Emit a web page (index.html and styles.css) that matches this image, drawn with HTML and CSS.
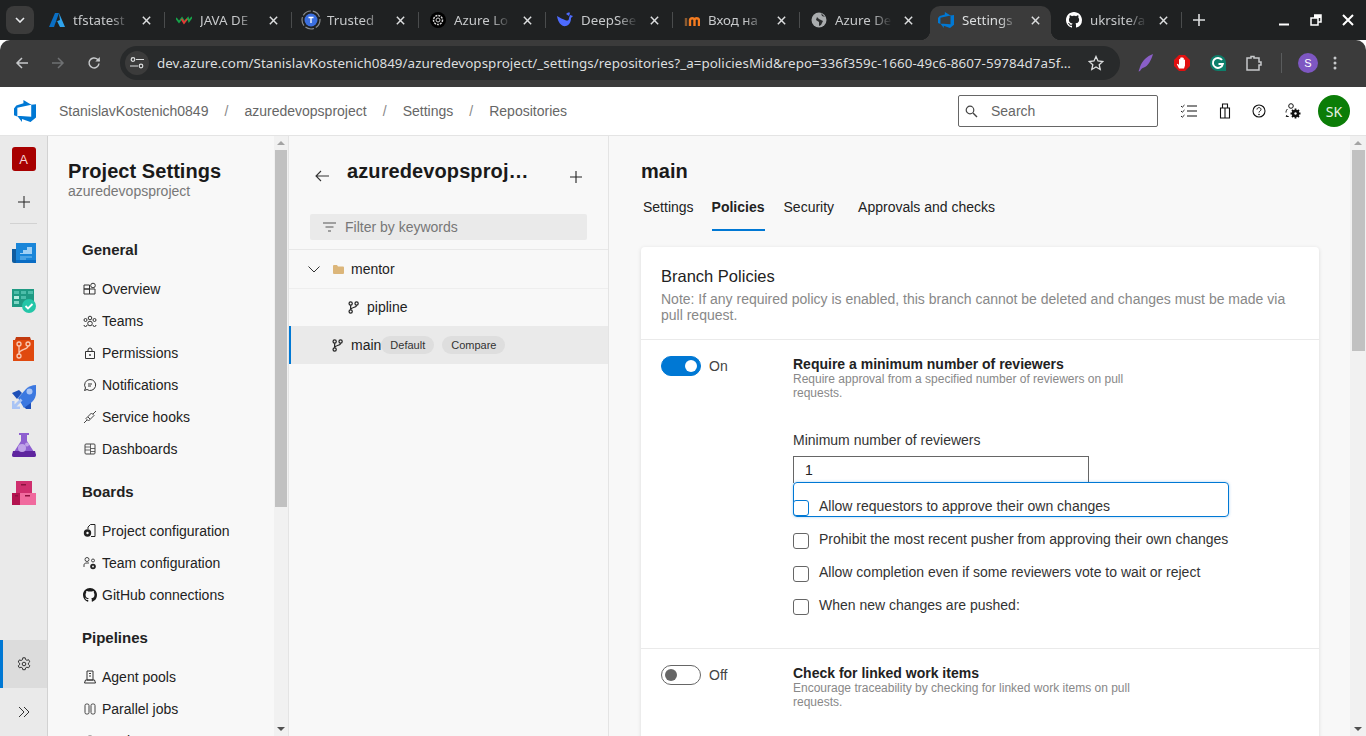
FILE: index.html
```html
<!DOCTYPE html>
<html lang="en">
<head>
<meta charset="UTF-8">
<meta name="viewport" content="width=device-width, initial-scale=1.0">
<title>Settings</title>
<link rel="stylesheet" href="styles.css">
</head>
<body>

<svg class="defs" width="0" height="0">
    <symbol id="x" viewBox="0 0 12 12"><path d="M2 2l8 8M10 2l-8 8" stroke="#dcdedf" stroke-width="1.6" fill="none"/></symbol>
    <symbol id="devops" viewBox="1 1 16 16"><path d="M17 4v9.740l-4 3.280-6.200-2.260V17l-3.510-4.590 10.230.8V4.440zM13.590 4.490L7.850 1v2.430L2.690 4.940 1 7.110v4.930l2.420 1V6.720z" fill="#0078d4"/></symbol>
    <symbol id="branch" viewBox="0 0 16 16"><g fill="none" stroke="#222" stroke-width="1.500"><circle cx="4.500" cy="3.200" r="2"/><circle cx="4.500" cy="12.800" r="2"/><circle cx="11.800" cy="3.200" r="2"/><path d="M4.500 5.200v5.600M11.800 5.200c0 3.300-7.300 2.300-7.300 5.300"/></g></symbol>
</svg>

<!-- tab strip -->
<div class="tabstrip">
    <div class="tab-menu"><svg width="10" height="6" viewBox="0 0 10 6"><path d="M1 1l4 4 4-4" stroke="#e8eaed" stroke-width="1.600" fill="none"/></svg></div>
    <div class="tab">
        <svg class="favicon" viewBox="0 0 16 16"><path d="M6 1h4L5 15H0z" fill="#0a6fc4"/><path d="M10 1l6 14h-5L8 9l-2 1 5-2z" fill="#2fa3ec"/></svg>
        <span class="tab-title">tfstatest</span><svg class="tab-x"><use href="#x"/></svg>
    </div>
    <div class="tab">
        <svg class="favicon" viewBox="0 0 16 16"><path d="M0 6l3 4 3-4 2.500 4L12 6l1 3 3-4" fill="none" stroke="#17a34a" stroke-width="1.800"/><path d="M5.500 7l2.500 4 3-4" fill="none" stroke="#e53935" stroke-width="1.800"/></svg>
        <span class="tab-title">JAVA DE</span><svg class="tab-x"><use href="#x"/></svg>
    </div>
    <div class="tab tab-wide-icon">
        <svg class="favicon" viewBox="0 0 20 20"><circle cx="10" cy="10" r="9" fill="none" stroke="#8a8c8e" stroke-width="1.200" stroke-dasharray="9 2"/><circle cx="10" cy="10" r="6.500" fill="#3b6fe0"/><path d="M7.500 7.500h5M10 7.500v5.500" stroke="#fff" stroke-width="1.300"/></svg>
        <span class="tab-title">Trusted</span><svg class="tab-x"><use href="#x"/></svg>
    </div>
    <div class="tab">
        <svg class="favicon" viewBox="0 0 16 16"><circle cx="8" cy="8" r="8" fill="#000"/><circle cx="8" cy="8" r="4.500" fill="none" stroke="#d5d5d5" stroke-width="1.500" stroke-dasharray="2 1"/><circle cx="8" cy="8" r="2" fill="none" stroke="#d5d5d5"/></svg>
        <span class="tab-title">Azure Lo</span><svg class="tab-x"><use href="#x"/></svg>
    </div>
    <div class="tab">
        <svg class="favicon" viewBox="0 0 16 16"><path d="M0 4c1 7 5 11 9 10 4-1 5-5 5-8l2-2-3-1-1 3c0 3-2 3-4 2C6 7 3 6 0 4z" fill="#4d6bfe"/><path d="M9 2c1-1 3-2 4-1l-1 3z" fill="#4d6bfe"/></svg>
        <span class="tab-title">DeepSee</span><svg class="tab-x"><use href="#x"/></svg>
    </div>
    <div class="tab">
        <svg class="favicon" viewBox="0 0 16 16"><path d="M6 14V8a2.300 2.300 0 0 1 4.500 0v6M10.500 8a2.300 2.300 0 0 1 4.500 0v6" fill="none" stroke="#f47b20" stroke-width="2.400"/><path d="M2 14V6" stroke="#8a5a30" stroke-width="2.400"/></svg>
        <span class="tab-title">Вход на</span><svg class="tab-x"><use href="#x"/></svg>
    </div>
    <div class="tab">
        <svg class="favicon" viewBox="0 0 16 16"><circle cx="8" cy="8" r="7.500" fill="#a9acae"/><path d="M3 2l3 3-1 3 3 2v4l2-1 2-4-4-2zM10 1l1 3 3 1z" fill="#2b2d2e"/></svg>
        <span class="tab-title">Azure De</span><svg class="tab-x"><use href="#x"/></svg>
    </div>
    <div class="tab tab-active">
        <svg class="favicon"><use href="#devops"/></svg>
        <span class="tab-title">Settings</span><svg class="tab-x"><use href="#x"/></svg>
    </div>
    <div class="tab">
        <svg class="favicon" viewBox="0 0 16 16"><path fill="#fff" d="M8 0C3.580 0 0 3.580 0 8c0 3.540 2.290 6.530 5.470 7.590.4.070.55-.170.55-.380 0-.190-.010-.820-.010-1.490-2.010.370-2.530-.490-2.690-.940-.090-.230-.480-.940-.820-1.130-.280-.150-.680-.520-.010-.530.630-.010 1.080.580 1.230.820.720 1.210 1.870.870 2.330.660.070-.520.280-.870.510-1.070-1.780-.200-3.640-.890-3.640-3.950 0-.870.310-1.590.820-2.150-.080-.200-.360-1.020.080-2.120 0 0 .670-.210 2.200.820.640-.180 1.320-.270 2-.270s1.360.090 2 .270c1.530-1.040 2.200-.820 2.200-.820.440 1.100.160 1.920.080 2.120.510.560.820 1.270.820 2.150 0 3.070-1.870 3.750-3.650 3.950.290.250.540.730.540 1.480 0 1.070-.010 1.930-.010 2.200 0 .210.150.460.550.380A8.010 8.010 0 0 0 16 8c0-4.420-3.580-8-8-8z"/></svg>
        <span class="tab-title">ukrsite/a</span><svg class="tab-x"><use href="#x"/></svg>
    </div>
    <svg class="new-tab" width="12" height="12" viewBox="0 0 12 12"><path d="M6 0v12M0 6h12" stroke="#dcdedf" stroke-width="1.600"/></svg>
    <div class="window-btns">
        <svg width="12" height="12" viewBox="0 0 12 12"><path d="M1 10.500h10" stroke="#fff" stroke-width="2"/></svg>
        <svg width="12" height="12" viewBox="0 0 12 12"><path d="M4 1h7v7H8.500M1 4h7v7H1z" fill="none" stroke="#fff" stroke-width="1.500"/><path d="M4 1h7v3H4z" fill="#fff"/></svg>
        <svg width="12" height="12" viewBox="0 0 12 12"><path d="M1 1l10 10M11 1L1 11" stroke="#fff" stroke-width="2"/></svg>
    </div>
</div>

<!-- browser toolbar -->
<div class="toolbar">
    <div class="nav-btn"><svg width="14" height="14" viewBox="0 0 14 14"><path d="M13 7H2M7 2L2 7l5 5" fill="none" stroke="#c7c9cb" stroke-width="1.500"/></svg></div>
    <div class="nav-btn"><svg width="14" height="14" viewBox="0 0 14 14"><path d="M1 7h11M7 2l5 5-5 5" fill="none" stroke="#6f7173" stroke-width="1.500"/></svg></div>
    <div class="nav-btn"><svg width="14" height="14" viewBox="0 0 14 14"><path d="M12 7.500A5 5 0 1 1 10.500 3.300L12.500 5" fill="none" stroke="#c7c9cb" stroke-width="1.500"/><path d="M12.800 1v4.500H8.300z" fill="#c7c9cb"/></svg></div>
    <div class="omnibox">
        <div class="site-btn"><svg width="14" height="12" viewBox="0 0 14 12"><g fill="none" stroke="#dcdedf" stroke-width="1.200"><circle cx="3" cy="2.500" r="1.800"/><path d="M6 2.500h8M0 9h8"/><circle cx="11" cy="9" r="1.800"/></g></svg></div>
        <span class="url">dev.azure.com/StanislavKostenich0849/azuredevopsproject/_settings/repositories?_a=policiesMid&amp;repo=336f359c-1660-49c6-8607-59784d7a5f…</span>
        <svg class="star" width="16" height="16" viewBox="0 0 16 16"><path d="M8 1.500l2 4.500 4.800.5-3.600 3.200 1 4.800L8 12l-4.200 2.500 1-4.800L1.200 6.500 6 6z" fill="none" stroke="#dcdedf" stroke-width="1.300"/></svg>
    </div>
    <div class="ext-btns">
        <svg width="16" height="18" viewBox="0 0 16 18"><path d="M15 0C9 2 4 7 2 13c-.5 1.500-1 3-1.500 4.500L2 17c1-2 2-3 4-3.500 4-1.500 7-7 9-13.500z" fill="#8a5fc7"/></svg>
        <svg width="16" height="16" viewBox="0 0 16 16"><path d="M5 0h6l5 5v6l-5 5H5l-5-5V5z" fill="#e01010"/><path d="M5 13.500L2.800 9.300l1-.6L5 10V4.500a.6.600 0 0 1 1.200 0V3a.6.600 0 0 1 1.200 0v-.3a.6.600 0 0 1 1.200 0V3.300a.6.600 0 0 1 1.200 0V5a.6.600 0 0 1 1.200 0v5.500l-1 3z" fill="#fff"/></svg>
        <svg width="16" height="16" viewBox="0 0 16 16"><path d="M8 0a8 8 0 0 1 8 8v8H8A8 8 0 0 1 8 0z" fill="#0d7f6b"/><path d="M12 5a5 5 0 1 0 .8 4H8.500" fill="none" stroke="#fff" stroke-width="2"/></svg>
        <svg width="16" height="16" viewBox="0 0 16 16"><path d="M1 3h4V1.500h3V3h5v4h2v3h-2v5H1z" fill="none" stroke="#c7c9cb" stroke-width="1.500"/></svg>
        <span class="ext-sep"></span>
        <span class="profile">S</span>
        <svg class="ext-dots" width="4" height="14" viewBox="0 0 4 14"><g fill="#c7c9cb"><circle cx="2" cy="2" r="1.500"/><circle cx="2" cy="7" r="1.500"/><circle cx="2" cy="12" r="1.500"/></g></svg>
    </div>
</div>

<!-- azure devops header -->
<div class="header">
    <svg class="logo"><use href="#devops"/></svg>
    <div class="crumbs">
        <span>StanislavKostenich0849</span><i>/</i>
        <span>azuredevopsproject</span><i>/</i>
        <span>Settings</span><i>/</i>
        <span>Repositories</span>
    </div>
    <div class="search">
        <svg width="13" height="13" viewBox="0 0 13 13"><circle cx="5" cy="5" r="3.800" fill="none" stroke="#444" stroke-width="1.200"/><path d="M8 8l4 4" stroke="#444" stroke-width="1.400"/></svg>
        <span>Search</span>
    </div>
    <div class="head-icons">
        <svg height="14" viewBox="0 0 16 14"><path d="M6 2h10M6 7h10M6 12h10" stroke="#111" stroke-width="1.200"/><path d="M0 2l1.300 1.200L3.500 1M0 7l1.300 1.200L3.500 6M0 12l1.300 1.200L3.500 11" fill="none" stroke="#222" stroke-width="1"/></svg>
        <svg height="16" viewBox="0 0 12 16"><path d="M3.500 5V1h5v4M1.500 5h9v10h-9zM6 5v10" fill="none" stroke="#111" stroke-width="1.100"/></svg>
        <svg height="14" viewBox="0 0 14 14"><circle cx="7" cy="7" r="6" fill="none" stroke="#111" stroke-width="1.100"/><path d="M5 5.500C5 3 9 3 9 5.500 9 7 7 7 7 8.500" fill="none" stroke="#111"/><circle cx="7" cy="10.500" r=".8" fill="#111"/></svg>
        <svg height="16" viewBox="0 0 16 16"><circle cx="6" cy="3" r="2.300" fill="none" stroke="#111"/><path d="M2.500 6C1.500 7 1 8 1 9.500M2 12l-.8 1.500h2.500" fill="none" stroke="#111"/><path d="M10.500 5.500v10M5.500 10.500h10M7 7l7 7M14 7l-7 7" stroke="#111" stroke-width="1.800"/><circle cx="10.500" cy="10.500" r="3.700" fill="#111"/><circle cx="10.500" cy="10.500" r="1.200" fill="#fff"/></svg>
    </div>
    <div class="user">SK</div>
</div>

<div class="app">
    <!-- left rail -->
    <div class="rail">
        <div class="org">A</div>
        <svg class="rail-plus" width="12" height="12" viewBox="0 0 12 12"><path d="M6 0v12M0 6h12" stroke="#222" stroke-width="1"/></svg>
        <div class="rail-divider"></div>
        <svg class="rail-icon" viewBox="0 0 24 24"><path d="M0 8h5v14H2a2 2 0 0 1-2-2z" fill="#0f5c9f"/><path d="M4 2h20v20H4z" fill="#1a86d9"/><path d="M8 12h3V9h4V6h5v7H8z" fill="#9fd0f5"/><path d="M8 15h12v2H14v2H8z" fill="#4aa3e4"/><path d="M4 19h20v3H4z" fill="#0a6cc4"/></svg>
        <svg class="rail-icon" viewBox="0 0 24 24"><path d="M0 0h22v18H0z" fill="#1f9a83"/><path d="M2 2h5v3H2zM9 2h5v3H9zM16 2h5v3h-5zM9 7h5v3H9z" fill="#4cbda9"/><path d="M2 7h5v3H2z" fill="#b9ece1"/><path d="M2 12h5v3H2z" fill="#7ed5c4"/><circle cx="17" cy="17" r="7" fill="#24c6a8"/><path d="M13.500 17l2.500 2.500 4.500-4.500" fill="none" stroke="#fff" stroke-width="1.800"/></svg>
        <svg class="rail-icon" viewBox="0 0 24 24"><path d="M4 0h14l1 3H3z" fill="#c23a0f"/><path d="M1 3h21v21H1z" fill="#e0490f"/><g fill="none" stroke="#f9c9b3" stroke-width="1.300"><circle cx="7" cy="7" r="2"/><circle cx="16" cy="7" r="2"/><circle cx="7" cy="19" r="2"/><path d="M7 9v8M16 9c0 4-9 3-9 8"/></g></svg>
        <svg class="rail-icon" viewBox="0 0 24 24"><path d="M0 8l7-3 3 3-5 6z" fill="#1e50b8"/><path d="M10 19l6-5 3 2v8h-5z" fill="#1e50b8"/><path d="M6 13L14 4C16 2 20 0 24 0v8c0 3-1 6-4 9l-8 6z" fill="#3c78e0"/><circle cx="17.500" cy="6.500" r="3" fill="#a9c4f5"/><path d="M0 16h2.500v3.500l6-6 2 2-6 6H8V24H0z" fill="#a9c4f5"/></svg>
        <svg class="rail-icon" viewBox="0 0 24 24"><path d="M7 0h10v2h-2v6l9 14a2 2 0 0 1-2 2H2a2 2 0 0 1-2-2L9 8V2H7z" fill="#8e5fd0"/><path d="M1 18h22l1 4a2 2 0 0 1-2 2H2a2 2 0 0 1-2-2z" fill="#5f259f"/><circle cx="10" cy="15" r="4" fill="#c0a3e8"/><circle cx="15" cy="11.500" r="2" fill="#c0a3e8"/></svg>
        <svg class="rail-icon" viewBox="0 0 24 24"><path d="M4 0h16v12H4z" fill="#cf2f6e"/><path d="M0 12h8v12H0z" fill="#b3134f"/><path d="M8 12h16v12H8z" fill="#f06a9e"/><path d="M9 3h5v1.500H9zM3 14h3v1.500H3zM13 14h5v1.500h-5z" fill="#8d1340"/></svg>
        <div class="rail-bottom">
            <div class="rail-settings"><svg width="14" height="14" viewBox="0 0 14 14"><path d="M5.800.8h2.400l.4 1.800 1.300.7 1.700-.6 1.200 2.100-1.400 1.200v1.500l1.400 1.200-1.200 2.100-1.700-.6-1.300.7-.4 1.800H5.800l-.4-1.800-1.300-.7-1.700.6L1.200 8.900l1.400-1.200V6.200L1.200 5 2.400 2.900l1.700.6 1.300-.7z" fill="none" stroke="#333"/><circle cx="7" cy="7" r="1.800" fill="none" stroke="#333"/></svg></div>
            <svg class="rail-expand" width="12" height="12" viewBox="0 0 12 12"><path d="M1 1l5 5-5 5M6 1l5 5-5 5" fill="none" stroke="#333"/></svg>
        </div>
    </div>

    <!-- project settings nav -->
    <div class="nav-panel">
        <div class="nav-inner">
            <h1>Project Settings</h1>
            <div class="nav-sub">azuredevopsproject</div>

            <h3>General</h3>
            <div class="nav-item"><svg viewBox="0 0 14 14"><path d="M1 3h5.500v4H1zM1 7h5.500v5H1zM6.500 7H12v5H6.500z" fill="none" stroke="#333"/><circle cx="10" cy="3.500" r="2.300" fill="none" stroke="#333"/></svg>Overview</div>
            <div class="nav-item"><svg viewBox="0 0 14 14"><g fill="none" stroke="#333"><circle cx="7" cy="4" r="1.800"/><circle cx="2.500" cy="6" r="1.500"/><circle cx="11.500" cy="6" r="1.500"/><circle cx="7" cy="9.500" r="2.300"/><path d="M1 11a1.500 1.500 0 0 0 3 0M10 11a1.500 1.500 0 0 0 3 0"/></g></svg>Teams</div>
            <div class="nav-item"><svg viewBox="0 0 14 14"><path d="M2.500 5.500h9v7h-9zM5 5.500V4a2 2 0 0 1 4 0v1.500" fill="none" stroke="#333"/><circle cx="7" cy="9" r=".9" fill="#333"/></svg>Permissions</div>
            <div class="nav-item"><svg viewBox="0 0 14 14"><path d="M7 1.500a5.500 5.500 0 1 1-3 10L1.500 12.500 2.500 10A5.500 5.500 0 0 1 7 1.500z" fill="none" stroke="#333"/><path d="M5 6h4M5 8h3" stroke="#333"/></svg>Notifications</div>
            <div class="nav-item"><svg viewBox="0 0 14 14"><path d="M1 13l3-3M13 1l-3 3" stroke="#444"/><path d="M3 8.500L8.500 3l2.500 2.500L5.500 11z" fill="none" stroke="#444"/><path d="M5 7l2 2" stroke="#444"/></svg>Service hooks</div>
            <div class="nav-item"><svg viewBox="0 0 14 14"><rect x="2" y="2" width="10" height="10" rx="1" fill="none" stroke="#444"/><path d="M7.500 2v10M2 5h5.500M2 8h5.500M7.500 6.500H12M7.500 9.500H12" stroke="#444" stroke-width=".8"/></svg>Dashboards</div>

            <h3>Boards</h3>
            <div class="nav-item"><svg viewBox="0 0 14 14"><path d="M5 3l2.500-2.500H12v12H8" fill="none" stroke="#222"/><path d="M5 3v2" stroke="#222"/><circle cx="4.500" cy="9" r="3.700" fill="#222"/><circle cx="4.500" cy="9" r="1.200" fill="#f8f8f8"/></svg>Project configuration</div>
            <div class="nav-item"><svg viewBox="0 0 14 14"><circle cx="4" cy="3.500" r="2" fill="none" stroke="#444"/><circle cx="10" cy="4.500" r="1.500" fill="none" stroke="#444"/><path d="M1 11V9c0-1.500 1-2 3-2h2" fill="none" stroke="#444"/><circle cx="10" cy="10.500" r="2.800" fill="#222"/><circle cx="10" cy="10.500" r=".9" fill="#f8f8f8"/></svg>Team configuration</div>
            <div class="nav-item"><svg viewBox="0 0 16 16"><path fill="#1b1b1b" d="M8 0C3.580 0 0 3.580 0 8c0 3.540 2.290 6.530 5.470 7.590.4.070.55-.170.55-.380 0-.190-.010-.820-.010-1.490-2.010.370-2.530-.490-2.690-.940-.090-.230-.480-.940-.820-1.130-.280-.150-.680-.520-.010-.530.630-.010 1.080.580 1.230.820.720 1.210 1.870.870 2.330.660.070-.520.280-.870.510-1.070-1.780-.200-3.640-.890-3.640-3.950 0-.870.310-1.590.820-2.150-.080-.200-.360-1.020.080-2.120 0 0 .670-.210 2.200.820.640-.180 1.320-.270 2-.270s1.360.090 2 .270c1.530-1.040 2.200-.820 2.200-.820.440 1.100.160 1.920.080 2.120.510.560.820 1.270.820 2.150 0 3.070-1.870 3.750-3.650 3.950.290.250.540.730.540 1.480 0 1.070-.010 1.930-.010 2.200 0 .210.150.460.550.380A8.010 8.010 0 0 0 16 8c0-4.420-3.580-8-8-8z"/></svg>GitHub connections</div>

            <h3>Pipelines</h3>
            <div class="nav-item"><svg viewBox="0 0 14 14"><path d="M4 1h6v9H4zM2.500 10l-1 3h11l-1-3zM6 3.500h2M6 6h2" fill="none" stroke="#333"/></svg>Agent pools</div>
            <div class="nav-item"><svg viewBox="0 0 14 14"><rect x="2" y="2" width="4" height="10" rx="1.500" fill="none" stroke="#444"/><rect x="8" y="2" width="4" height="10" rx="1.500" fill="none" stroke="#444"/></svg>Parallel jobs</div>
            <div class="nav-item"><svg viewBox="0 0 14 14"><circle cx="7" cy="7" r="5" fill="none" stroke="#444"/></svg>Settings</div>
        </div>
        <div class="scrollbar">
            <span class="arrow-up"></span>
            <div class="thumb thumb-nav"></div>
            <span class="arrow-down"></span>
        </div>
    </div>

    <!-- repositories column -->
    <div class="repo-panel">
        <div class="repo-head">
            <svg width="14" height="12" viewBox="0 0 14 12"><path d="M14 6H1M6 1L1 6l5 5" fill="none" stroke="#333" stroke-width="1.100"/></svg>
            <span class="repo-name">azuredevopsproj…</span>
            <svg class="repo-add" width="12" height="12" viewBox="0 0 12 12"><path d="M6 0v12M0 6h12" stroke="#222" stroke-width="1.100"/></svg>
        </div>
        <div class="filter">
            <svg width="13" height="10" viewBox="0 0 13 10"><path d="M0 1h13M2.500 5h8M5 9h3" stroke="#555" stroke-width="1"/></svg>
            <span>Filter by keywords</span>
        </div>
        <div class="repo-row row-folder">
            <svg width="12" height="7" viewBox="0 0 12 7"><path d="M.5.500L6 6l5.500-5.500" fill="none" stroke="#333"/></svg>
            <svg class="folder" width="11" height="9" viewBox="0 0 11 9"><path d="M0 1a1 1 0 0 1 1-1h3l1 1.500h5a1 1 0 0 1 1 1V8a1 1 0 0 1-1 1H1a1 1 0 0 1-1-1z" fill="#dcb67a"/></svg>
            <span>mentor</span>
        </div>
        <div class="repo-row row-child">
            <svg class="branch"><use href="#branch"/></svg>
            <span>pipline</span>
        </div>
        <div class="repo-row row-selected">
            <svg class="branch"><use href="#branch"/></svg>
            <span>main</span>
            <span class="pill">Default</span>
            <span class="pill pill-compare">Compare</span>
        </div>
    </div>

    <!-- branch details -->
    <div class="detail">
        <div class="detail-inner">
            <h1>main</h1>
            <div class="pivots">
                <span>Settings</span>
                <span class="pivot-on">Policies</span>
                <span>Security</span>
                <span class="pivot-last">Approvals and checks</span>
            </div>
            <div class="card">
                <div class="card-head">
                    <h2>Branch Policies</h2>
                    <p>Note: If any required policy is enabled, this branch cannot be deleted and changes must be made via pull request.</p>
                </div>
                <div class="policy">
                    <div class="switch-col">
                        <span class="switch switch-on"></span><span>On</span>
                    </div>
                    <div class="policy-body">
                        <div class="policy-title">Require a minimum number of reviewers</div>
                        <div class="policy-desc">Require approval from a specified number of reviewers on pull requests.</div>
                        <label class="min-label">Minimum number of reviewers</label>
                        <div class="min-input">1</div>
                        <div class="check check-focus"><span class="box"></span>Allow requestors to approve their own changes</div>
                        <div class="check"><span class="box"></span>Prohibit the most recent pusher from approving their own changes</div>
                        <div class="check"><span class="box"></span>Allow completion even if some reviewers vote to wait or reject</div>
                        <div class="check"><span class="box"></span>When new changes are pushed:</div>
                    </div>
                </div>
                <div class="policy policy-next">
                    <div class="switch-col">
                        <span class="switch"></span><span>Off</span>
                    </div>
                    <div class="policy-body">
                        <div class="policy-title">Check for linked work items</div>
                        <div class="policy-desc">Encourage traceability by checking for linked work items on pull requests.</div>
                    </div>
                </div>
            </div>
        </div>
        <div class="scrollbar scrollbar-main">
            <span class="arrow-up"></span>
            <div class="thumb thumb-main"></div>
            <span class="arrow-down"></span>
        </div>
    </div>
</div>

</body>
</html>
```

FILE: styles.css
```css
* {
    box-sizing: border-box;
}

html, body {
    height: 736px;
    margin: 0;
    overflow: hidden;
}

body {
    font-family: "Liberation Sans", Arial, sans-serif;
    font-size: 14px;
    color: #222;
    background-color: #fff;
}

.defs {
    position: absolute;
}

/* tab strip */
.tabstrip {
    display: flex;
    align-items: center;
    height: 40px;
    padding-left: 6px;
    background-color: #1f2122;
    font-family: "Noto Sans", sans-serif;
    font-size: 13.300px;
    color: #c7c9cb;
}

.tab-menu {
    display: flex;
    align-items: center;
    justify-content: center;
    flex: none;
    width: 28px;
    height: 28px;
    margin-right: 4px;
    border-radius: 8px;
    background-color: #3b3b3b;
}

.tab {
    position: relative;
    display: flex;
    align-items: center;
    flex: none;
    width: 127px;
    height: 34px;
    margin-top: 6px;
    padding-left: 11px;
    padding-bottom: 6px;
}

.tab::after {
    content: "";
    position: absolute;
    top: 6px;
    right: 0;
    width: 1px;
    height: 16px;
    background-color: #4a4c4d;
}

.tab:nth-child(8)::after {
    display: none;
}

.favicon {
    flex: none;
    width: 16px;
    height: 16px;
    margin-right: 8px;
}

.tab-wide-icon .favicon {
    width: 20px;
    height: 20px;
    margin-left: -2px;
    margin-right: 6px;
}

.tab-title {
    width: 57px;
    flex: none;
    overflow: hidden;
    white-space: nowrap;
    -webkit-mask-image: linear-gradient(to right, #000 65%, transparent 100%);
    mask-image: linear-gradient(to right, #000 65%, transparent 100%);
}

.tab-x {
    flex: none;
    width: 11px;
    height: 11px;
    margin-left: 11px;
}

.tab-active {
    margin-left: 3px;
    width: 121px;
    padding-left: 8px;
    border-radius: 10px 10px 0 0;
    background-color: #3b3b3b;
    color: #dcdedf;
}

.tab-active::before, .tab-active::after {
    content: "";
    position: absolute;
    top: auto;
    bottom: 0;
    width: 10px;
    height: 10px;
    background-color: transparent;
}

.tab-active::before {
    left: -10px;
    background: radial-gradient(circle at 0 0, transparent 10px, #3b3b3b 10.500px);
}

.tab-active::after {
    right: -10px;
    background: radial-gradient(circle at 100% 0, transparent 10px, #3b3b3b 10.500px);
}

.tab-active + .tab {
    margin-left: 4px;
}

.new-tab {
    flex: none;
    margin-left: 11px;
}

.window-btns {
    display: flex;
    align-items: center;
    gap: 20px;
    margin-left: auto;
    padding-right: 12px;
}

/* browser toolbar */
.toolbar {
    position: relative;
    display: flex;
    align-items: center;
    height: 47px;
    padding-bottom: 1px;
    border-radius: 10px 10px 0 0;
    background-color: #3b3b3b;
}

.nav-btn {
    display: flex;
    align-items: center;
    justify-content: center;
    flex: none;
    width: 36px;
    height: 34px;
}

.nav-btn:first-child {
    margin-left: 4px;
}

.omnibox {
    display: flex;
    align-items: center;
    flex: none;
    width: 1000px;
    height: 34px;
    margin-left: 8px;
    padding-left: 5px;
    border-radius: 17px;
    background-color: #282a2b;
}

.site-btn {
    display: flex;
    align-items: center;
    justify-content: center;
    flex: none;
    width: 24px;
    height: 24px;
    border-radius: 50%;
    background-color: #3b3b3b;
}

.url {
    flex: none;
    width: 915px;
    margin-left: 8px;
    white-space: nowrap;
    font-family: "Noto Sans", sans-serif;
    font-size: 13.400px;
    letter-spacing: 0.050px;
    color: #dcdedf;
}

.star {
    flex: none;
    margin-left: 16px;
}

.ext-btns {
    display: flex;
    align-items: center;
    flex: none;
    gap: 20px;
    margin-left: 18px;
}

.ext-sep {
    width: 1px;
    height: 20px;
    margin-left: -1px;
    margin-right: -4px;
    background-color: #5a5c5d;
}

.profile {
    display: flex;
    align-items: center;
    justify-content: center;
    width: 20px;
    height: 20px;
    border-radius: 50%;
    background-color: #7e57c2;
    font-size: 11px;
    color: #fff;
}

.ext-dots {
    margin-left: -5px;
}

/* devops header */
.header {
    display: flex;
    align-items: center;
    height: 49px;
    padding-left: 14px;
    border-bottom: 1px solid #e4e4e4;
    background-color: #fff;
}

.logo {
    flex: none;
    width: 22px;
    height: 22px;
}

.crumbs {
    display: flex;
    align-items: center;
    margin-left: 23px;
    color: #666;
}

.crumbs i {
    width: 36px;
    font-style: normal;
    text-align: center;
    color: #888;
}

.search {
    display: flex;
    align-items: center;
    width: 200px;
    height: 32px;
    margin-left: auto;
    padding-left: 6px;
    border: 1px solid #666;
    border-radius: 2px;
    color: #666;
}

.search span {
    margin-left: 13px;
}

.head-icons {
    display: flex;
    align-items: center;
    gap: 18px;
    margin-left: 23px;
}

.head-icons svg {
    flex: none;
    width: 16px;
}

.head-icons svg:first-child {
    margin-right: 2px;
}

.user {
    display: flex;
    align-items: center;
    justify-content: center;
    width: 32px;
    height: 32px;
    margin-left: 17px;
    margin-right: 16px;
    border-radius: 50%;
    background-color: #0b7d07;
    color: #e8f3e8;
    font-family: "Noto Sans", sans-serif;
    font-size: 14px;
}

/* page columns */
.app {
    display: flex;
    height: 600px;
    background-color: #f8f8f8;
}

.rail {
    display: flex;
    flex-direction: column;
    align-items: center;
    flex: none;
    width: 48px;
    padding-top: 11px;
    border-right: 1px solid #d2d2d2;
    background-color: #eaeaea;
}

.org {
    display: flex;
    align-items: center;
    justify-content: center;
    width: 24px;
    height: 24px;
    border-radius: 3px;
    background-color: #a80000;
    color: #f5d5d5;
    font-size: 13px;
}

.rail-plus {
    margin-top: 25px;
}

.rail-divider {
    width: 27px;
    height: 1px;
    margin-top: 15px;
    margin-bottom: 17px;
    background-color: #d2d2d2;
}

.rail-icon {
    flex: none;
    width: 24px;
    height: 24px;
    margin-bottom: 24px;
}

.rail-bottom {
    align-self: stretch;
    margin-top: auto;
    padding-bottom: 18px;
    height: 96px;
}

.rail-settings {
    display: flex;
    align-items: center;
    justify-content: center;
    height: 48px;
    padding-right: 2px;
    border-left: 3px solid #0078d4;
    background-color: #dcdcdc;
}

.rail-expand {
    display: block;
    margin: 18px 0 0 18px;
    height: 12px;
}

.nav-panel {
    display: flex;
    flex: none;
    width: 240px;
}

.nav-inner {
    flex: none;
    width: 226px;
    height: 600px;
    overflow: hidden;
    padding: 24px 0 0 20px;
}

.nav-inner h1 {
    margin: 0;
    font-size: 20px;
    line-height: 22px;
    font-weight: bold;
    letter-spacing: 0.060px;
    color: #1a1a1a;
}

.nav-sub {
    line-height: 19px;
    color: #777;
}

.nav-inner h3 {
    margin: 0 0 0 14px;
    padding: 39px 0 13px;
    font-size: 15px;
    line-height: 20px;
    font-weight: bold;
    color: #222;
}

.nav-inner h3 ~ h3 {
    padding-top: 17px;
    padding-bottom: 13px;
}

.nav-item {
    display: flex;
    align-items: center;
    height: 32px;
    margin-left: 14px;
}

.nav-item svg {
    flex: none;
    width: 14px;
    height: 14px;
    margin-left: 1px;
    margin-right: 5px;
}

/* scrollbars */
.scrollbar {
    position: relative;
    flex: none;
    width: 14px;
    height: 600px;
    background-color: #f1f1f1;
}

.scrollbar-main {
    width: 16px;
}

.thumb {
    position: absolute;
    left: 1px;
    right: 1px;
    background-color: #c1c1c1;
}

.thumb-nav {
    top: 14px;
    height: 357px;
}

.thumb-main {
    top: 14px;
    left: 2px;
    height: 201px;
}

.arrow-up, .arrow-down {
    position: absolute;
    left: 50%;
    margin-left: -4px;
    border-left: 4px solid transparent;
    border-right: 4px solid transparent;
}

.arrow-up {
    top: 5px;
    border-bottom: 4px solid #a3a3a3;
}

.arrow-down {
    bottom: 5px;
    border-top: 4px solid #505050;
}

/* repo column */
.repo-panel {
    flex: none;
    width: 321px;
    height: 600px;
    border-left: 1px solid #e4e4e4;
    border-right: 1px solid #e4e4e4;
}

.repo-head {
    display: flex;
    align-items: center;
    height: 78px;
    padding-top: 2px;
    padding-left: 26px;
}

.repo-name {
    width: 190px;
    margin-left: 18px;
    margin-top: -9px;
    font-size: 20px;
    font-weight: bold;
    letter-spacing: 0.100px;
    color: #1a1a1a;
}

.repo-add {
    margin-left: 33px;
    margin-top: 2px;
}

.filter {
    display: flex;
    align-items: center;
    width: 277px;
    height: 26px;
    margin-left: 21px;
    padding-left: 13px;
    border-radius: 2px;
    background-color: #eaeaea;
    color: #777;
}

.filter span {
    margin-left: 9px;
}

.repo-row {
    display: flex;
    align-items: center;
}

.row-folder {
    height: 40px;
    margin-top: 9px;
    padding-left: 19px;
    border-top: 1px solid #e8e8e8;
    border-bottom: 1px solid #eeeeee;
}

.row-folder .folder {
    margin-left: 13px;
    margin-right: 7px;
}

.row-child {
    height: 37px;
    padding-left: 58px;
    padding-bottom: 1px;
}

.branch {
    flex: none;
    width: 13px;
    height: 13px;
    margin-right: 7px;
}

.row-selected {
    height: 38px;
    padding-left: 40px;
    border-left: 2px solid #0078d4;
    background-color: #eaeaea;
}

.pill {
    display: flex;
    align-items: center;
    height: 18px;
    padding: 0 9px;
    border-radius: 9px;
    background-color: #dedede;
    font-size: 11px;
    color: #333;
}

.pill-compare {
    margin-left: 8px;
}

/* branch details */
.detail {
    display: flex;
    flex: 1;
    min-width: 0;
    height: 600px;
}

.detail-inner {
    flex: 1;
    min-width: 0;
    height: 600px;
    overflow: hidden;
    padding: 24px 31px 0 32px;
}

.detail-inner h1 {
    margin: 0;
    font-size: 20px;
    line-height: 22px;
    font-weight: bold;
    color: #1a1a1a;
}

.pivots {
    display: flex;
    margin-top: 13px;
    padding-left: 2px;
}

.pivots span {
    height: 36px;
    margin-right: 18px;
    padding-top: 2px;
    line-height: 20px;
}

.pivots .pivot-on {
    font-weight: bold;
    border-bottom: 2px solid #0078d4;
    margin-right: 19px;
}

.pivots .pivot-last {
    margin-left: 6px;
}

.card {
    margin-top: 16px;
    border-radius: 4px;
    background-color: #fff;
    box-shadow: 0 1px 4px rgba(0, 0, 0, 0.12);
}

.card-head {
    padding: 19px 20px 16px;
    border-bottom: 1px solid #eaeaea;
}

.card-head h2 {
    margin: 0;
    font-size: 16.500px;
    line-height: 20px;
    font-weight: normal;
    color: #222;
}

.card-head p {
    margin: 5px 0 0;
    line-height: 16px;
    color: #888;
}

.policy {
    display: flex;
    height: 309px;
    padding: 16px 20px;
    border-bottom: 1px solid #eaeaea;
}

.policy-next {
    height: 100px;
    border-bottom: none;
}

.switch-col {
    display: flex;
    align-items: flex-start;
    flex: none;
    width: 132px;
    color: #444;
    line-height: 20px;
}

.switch {
    position: relative;
    flex: none;
    width: 40px;
    height: 20px;
    margin-right: 8px;
    border: 1px solid #666;
    border-radius: 10px;
    background-color: #fff;
}

.switch::after {
    content: "";
    position: absolute;
    top: 3px;
    left: 3px;
    width: 12px;
    height: 12px;
    border-radius: 50%;
    background-color: #666;
}

.switch-on {
    border-color: #0078d4;
    background-color: #0078d4;
}

.switch-on::after {
    left: 23px;
    background-color: #fff;
}

.policy-body {
    flex: 1;
    min-width: 0;
}

.policy-title {
    line-height: 16px;
    font-weight: bold;
    color: #222;
}

.policy-desc {
    width: 350px;
    font-size: 12px;
    line-height: 14px;
    color: #888;
}

.min-label {
    display: block;
    margin-top: 31px;
    line-height: 18px;
    color: #333;
}

.min-input {
    width: 296px;
    height: 27px;
    margin-top: 7px;
    padding-left: 11px;
    border: 1px solid #666;
    border-bottom: none;
    line-height: 26px;
    font-size: 14px;
    color: #222;
}

.check {
    display: flex;
    align-items: flex-start;
    height: 33px;
    line-height: 18px;
    color: #333;
    white-space: nowrap;
}

.box {
    flex: none;
    width: 16px;
    height: 16px;
    margin-top: 3px;
    margin-right: 10px;
    border: 1px solid #666;
    border-radius: 3px;
    background-color: #fff;
}

.check-focus {
    align-items: flex-end;
    width: 436px;
    height: 35px;
    margin-top: -1px;
    margin-bottom: 13px;
    border: 1px solid #0078d4;
    border-radius: 4px;
    box-shadow: 0 0 3px rgba(0, 120, 212, 0.35);
    line-height: 20px;
}

.check-focus .box {
    margin-left: -1px;
    border-color: #0078d4;
}
```
